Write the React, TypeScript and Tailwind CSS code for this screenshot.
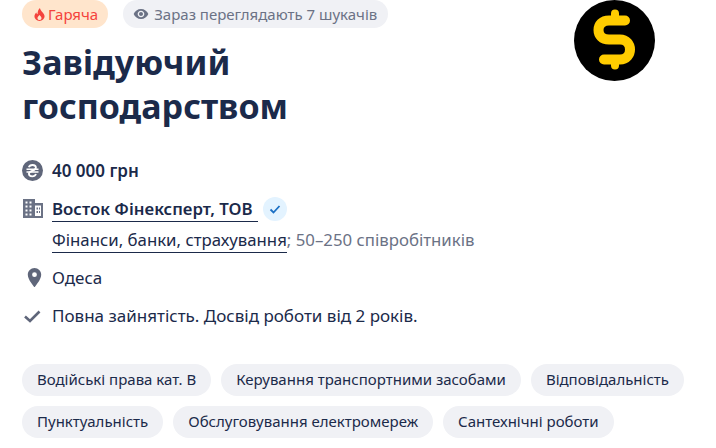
import { MdPlace, MdVisibility } from "react-icons/md";

const tagRows = [
  ["Водійські права кат. B", "Керування транспортними засобами", "Відповідальність"],
  ["Пунктуальність", "Обслуговування електромереж", "Сантехнічні роботи"],
];

function HryvniaIcon() {
  return (
    <svg viewBox="0 0 21 21" className="h-[21px] w-[21px]">
      <circle cx="10.500" cy="10.500" r="10.500" fill="#5f667a" />
      <path d="M6.800 7.300c.5-1.500 2-2.300 3.700-2.300 1.900 0 3.400 1 3.400 2.600 0 1.900-2 2.600-3.500 3.200-1.500.6-3.500 1.300-3.500 3 0 1.500 1.500 2.500 3.400 2.500 1.700 0 3.100-.8 3.700-2.300" fill="none" stroke="#fff" strokeWidth="1.800" />
      <path d="M4.500 9.200h12M4.500 12h12" stroke="#fff" strokeWidth="1.500" />
    </svg>
  );
}

function BuildingIcon() {
  return (
    <svg viewBox="0 0 20 19" className="h-[19px] w-5" fill="#6b7285">
      <path fillRule="evenodd" d="M0 0h12v4h8v15H0V0Zm2.500 2.500v2h2v-2h-2Zm4 0v2h2v-2h-2Zm-4 4v2h2v-2h-2Zm4 0v2h2v-2h-2Zm-4 4v2h2v-2h-2Zm4 0v2h2v-2h-2Zm-4 4v2h2v-2h-2Zm4 0v2h2v-2h-2ZM12 6.500V17h6V6.500h-6Zm1.500 2h1.500v2h-1.500v-2Zm2.500 0h1v2h-1v-2Zm-2.500 3.500h1.500v2h-1.500v-2Zm2.500 0h1v2h-1v-2Z" />
    </svg>
  );
}

function FlameIcon() {
  return (
    <svg viewBox="0 0 12 14" className="h-[13px] w-[11px]" fill="#f4433c">
      <path fillRule="evenodd" d="M6.500 0c.4 2.200 1.400 3.100 2.700 4.500C10.500 5.800 11.500 7.200 11.500 9c0 2.900-2.500 5-5.500 5S.5 11.900.5 9c0-1.800.9-3.300 2.100-4.300.1 1 .5 1.700 1.300 2.100C3.800 4.300 4.600 1.700 6.500 0ZM6 7.500C5 8.700 3.800 9.500 3.800 11c0 1.200 1 2 2.200 2s2.200-.8 2.200-2c0-1.500-1.200-2.300-2.200-3.500Z" />
    </svg>
  );
}

function VerifiedCheck() {
  return (
    <svg viewBox="0 0 12 12" className="h-3 w-3" fill="none" stroke="#1a6fc4" strokeWidth="1.800">
      <path d="M1.500 6.500 4.500 9.500 10.500 3" />
    </svg>
  );
}

function CheckIcon() {
  return (
    <svg viewBox="0 0 20 20" className="h-5 w-5" fill="none" stroke="#5f667a" strokeWidth="2.600">
      <path d="M3 10.500 8 15 17.500 5.500" />
    </svg>
  );
}

function DollarLogo() {
  return (
    <svg viewBox="0 0 81 81" className="h-[81px] w-[81px] shrink-0">
      <circle cx="40.500" cy="40.500" r="40.500" fill="#000" />
      <path d="M51 20.500H35C28 20.500 24.500 25 24.500 30C24.500 35 28 39.500 35 39.500H46C52.500 39.500 56 44.500 56 49.500C56 54.500 52.500 59.500 46 59.500H30" fill="none" stroke="#ffcc00" strokeWidth="10" strokeLinecap="round" />
      <path d="M41 13.500V20M41 60V65.500" fill="none" stroke="#ffcc00" strokeWidth="8" strokeLinecap="round" />
    </svg>
  );
}

export default function App() {
  return (
    <div className="h-[448px] w-[716px] overflow-hidden bg-white pl-[22px] pr-[61px] font-['Noto_Sans',sans-serif] text-[17px] text-[#1b2a4a]">
      <div className="flex items-start justify-between">
        <div>
          <div className="flex items-center gap-[15px] text-[15px]">
            <span className="flex h-7 items-center gap-[3px] rounded-full bg-[#ffe5cc] pl-[12px] pr-[10px] text-[#f4433c]">
              <FlameIcon />
              Гаряча
            </span>
            <span className="flex h-7 items-center gap-[5px] rounded-full bg-[#f0f1f5] pl-[10px] pr-[11px] text-[#6b7285]">
              <MdVisibility className="h-4 w-4" />
              Зараз переглядають 7 шукачів
            </span>
          </div>
          <h1 className="mt-[12px] text-[34px] font-bold leading-[44px] text-[#1b2a4a]">
            Завідуючий
            <br />
            господарством
          </h1>
        </div>
        <DollarLogo />
      </div>
      <div className="mt-[30px] flex items-center gap-[9px]">
        <HryvniaIcon />
        <span className="font-semibold">40 000 грн</span>
      </div>
      <div className="mt-[15px] flex items-start gap-[9px] pl-[1px]">
        <BuildingIcon />
        <div className="-mt-[2px]">
          <div className="flex items-center gap-[5px]">
            <span className="border-b border-[#1b2a4a] pr-[5px] text-[16.800px] font-semibold leading-[24px]">Восток Фінексперт, ТОВ</span>
            <span className="flex h-6 w-6 items-center justify-center rounded-full bg-[#e3f3ff]">
              <VerifiedCheck />
            </span>
          </div>
          <div className="mt-[6px] text-[16.800px] leading-[24px] text-[#6b7285]">
            <span className="border-b border-[#1b2a4a] pb-[1px] text-[#1b2a4a]">Фінанси, банки, страхування</span>; 50–250 співробітників
          </div>
        </div>
      </div>
      <div className="mt-[13px] flex items-center gap-[6px] pl-[1px]">
        <MdPlace className="h-[23px] w-[23px] text-[#5f667a]" />
        <span>Одеса</span>
      </div>
      <div className="mt-[13px] flex items-center gap-[10px]">
        <CheckIcon />
        <span>Повна зайнятість. Досвід роботи від 2 років.</span>
      </div>
      <div className="mt-[35px] flex flex-col gap-[10px] text-[15px]">
        {tagRows.map((row, i) => (
          <div key={i} className="flex gap-[10px]">
            {row.map((tag) => (
              <span key={tag} className="flex h-8 items-center whitespace-nowrap rounded-full bg-[#f0f1f5] px-[15px]">
                {tag}
              </span>
            ))}
          </div>
        ))}
      </div>
    </div>
  );
}
